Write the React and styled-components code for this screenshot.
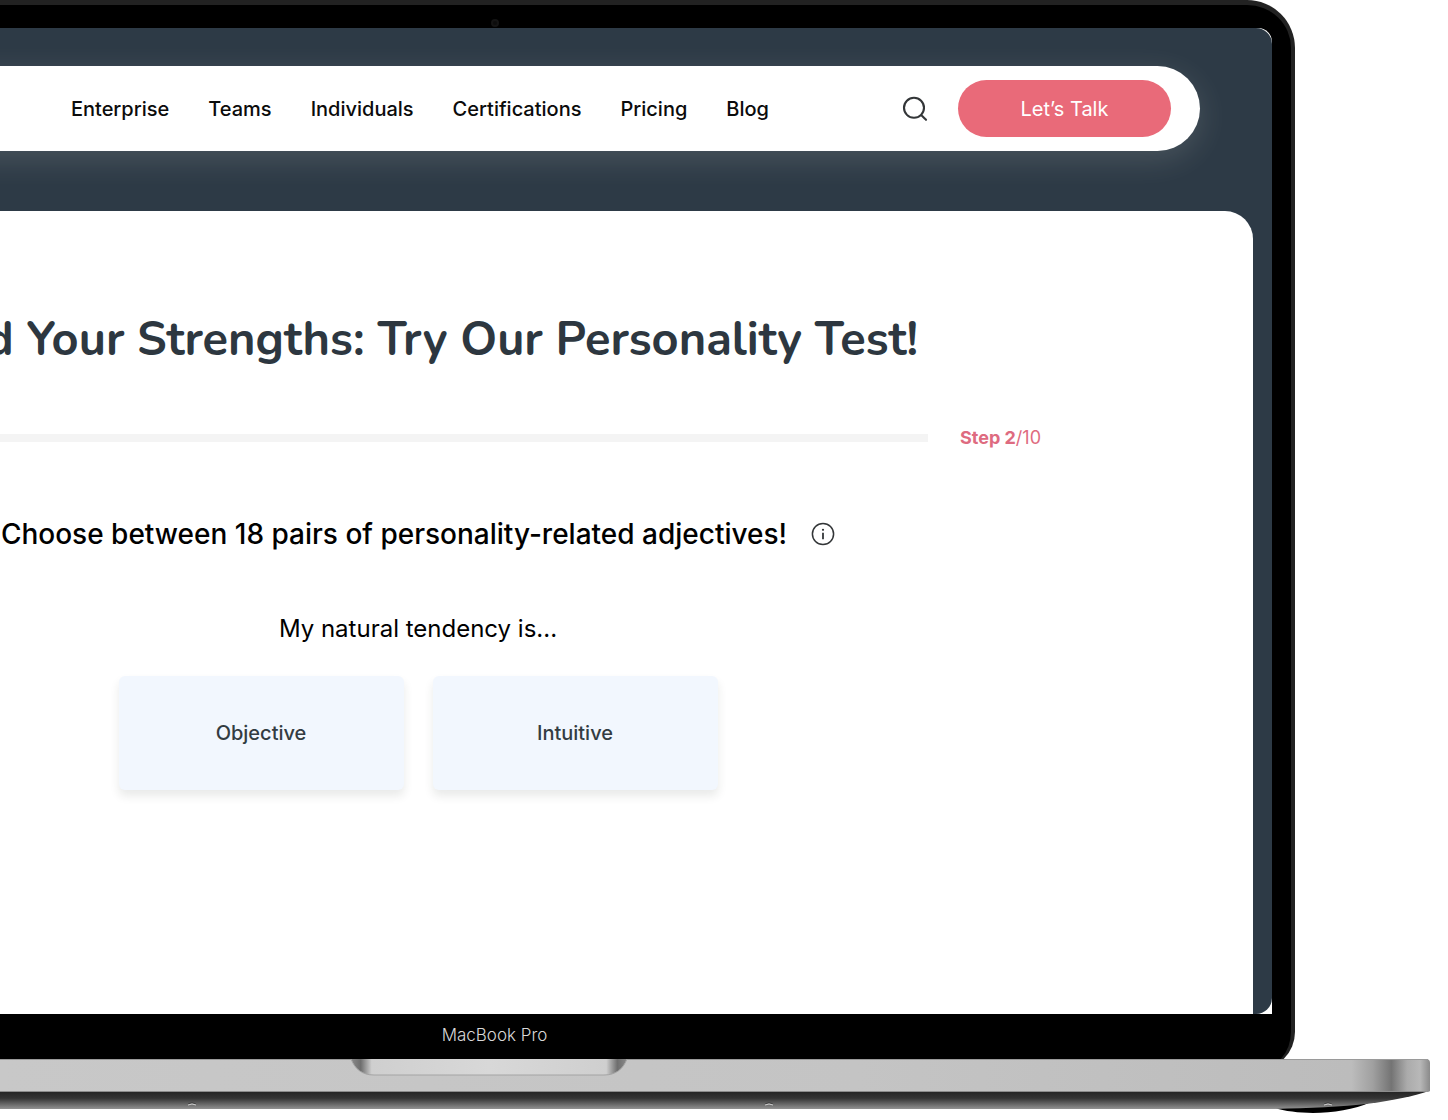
import React from 'react';
import styled, { createGlobalStyle } from 'styled-components';

const links = ['Enterprise', 'Teams', 'Individuals', 'Certifications', 'Pricing', 'Blog'];
const answers = ['Objective', 'Intuitive'];

const SearchIcon = () => (
    <svg width="26" height="26" viewBox="0 0 26 26" fill="none" stroke="#333638" strokeWidth="2.1" strokeLinecap="round" aria-hidden="true">
        <circle cx="12" cy="11.8" r="10" />
        <path d="M19.4 19.2L24 23.8" />
    </svg>
);

const InfoIcon = () => (
    <svg width="24" height="24" viewBox="0 0 24 24" fill="none" stroke="#333638" strokeWidth="1.5" aria-hidden="true">
        <circle cx="12" cy="12" r="10.6" />
        <path d="M12 10.8V17.2" strokeWidth="1.8" />
        <circle cx="12" cy="7.8" r="1.1" fill="#333638" stroke="none" />
    </svg>
);

const LaptopBase = () => (
    <BaseDrawing viewBox="0 0 1448 56" aria-hidden="true">
        <defs>
            <linearGradient id="metal" gradientUnits="userSpaceOnUse" x1="0" y1="0" x2="1430" y2="0">
                <stop offset="0" stopColor="#c8c8c8" />
                <stop offset="0.6" stopColor="#c4c4c4" />
                <stop offset="0.945" stopColor="#bcbcbc" />
                <stop offset="0.96" stopColor="#a0a0a0" />
                <stop offset="0.973" stopColor="#747474" />
                <stop offset="0.984" stopColor="#ababab" />
                <stop offset="0.993" stopColor="#b8b8b8" />
                <stop offset="1" stopColor="#8a8a8a" />
            </linearGradient>
            <linearGradient id="under" x1="0" y1="0" x2="0" y2="1">
                <stop offset="0" stopColor="#232323" />
                <stop offset="0.4" stopColor="#343434" />
                <stop offset="1" stopColor="#929292" />
            </linearGradient>
            <linearGradient id="notch" x1="0" y1="0" x2="1" y2="0">
                <stop offset="0" stopColor="#8a8a8a" />
                <stop offset="0.035" stopColor="#6e6e6e" />
                <stop offset="0.075" stopColor="#cfcfcf" />
                <stop offset="0.5" stopColor="#d8d8d8" />
                <stop offset="0.925" stopColor="#cfcfcf" />
                <stop offset="0.965" stopColor="#6e6e6e" />
                <stop offset="1" stopColor="#8a8a8a" />
            </linearGradient>
        </defs>
        <path d="M1274 49C1300 56.5 1342 56 1371 43Z" fill="#000" />
        <path d="M0 32H1429C1415 37 1395 41 1370 44.5C1340 48 1310 49 1274 50H0Z" fill="url(#under)" />
        <path d="M0 0H1426Q1430 0 1430 4V32Q1429 33 1424 33H0Z" fill="url(#metal)" />
        <path d="M0 32.5H1426" stroke="#8c8c8c" />
        <path d="M0 0.5H1428" stroke="#9a9a9a" />
        <path d="M351 0C355 10 362 16 374 16H604C616 16 623 10 627 0Z" fill="url(#notch)" />
        <path d="M351 0C355 10 362 16 374 16H604C616 16 623 10 627 0" fill="none" stroke="#a4a4a4" />
        {[192, 769, 1328].map(x => (
            <g key={x}>
                <path d={`M${x - 4} 45Q${x} 42 ${x + 4} 45`} fill="none" stroke="#444" />
                <path d={`M${x - 4} 46L${x} 45L${x + 4} 46`} fill="none" stroke="#d0d0d0" />
            </g>
        ))}
    </BaseDrawing>
);

const App = () => (
    <Page>
        <GlobalStyle />
        <Lid>
            <Camera />
            <ScreenBack>
                <Screen>
                    <NavBar>
                        <Nav>
                            {links.map(link => (
                                <NavLink key={link} href="#">{link}</NavLink>
                            ))}
                        </Nav>
                        <IconButton aria-label="Search">
                            <SearchIcon />
                        </IconButton>
                        <TalkButton>Let’s Talk</TalkButton>
                    </NavBar>
                    <Panel>
                        <Title>Find Your Strengths: Try Our Personality Test!</Title>
                        <ProgressRow>
                            <Progress value="1" max="10" aria-label="Test progress" />
                            <Step><b>Step 2</b>/10</Step>
                        </ProgressRow>
                        <Question>
                            Choose between 18 pairs of personality-related adjectives!
                            <IconButton aria-label="More information">
                                <InfoIcon />
                            </IconButton>
                        </Question>
                        <Prompt>My natural tendency is...</Prompt>
                        <Answers>
                            {answers.map(answer => (
                                <Answer key={answer}>{answer}</Answer>
                            ))}
                        </Answers>
                    </Panel>
                </Screen>
            </ScreenBack>
            <Model>MacBook Pro</Model>
        </Lid>
        <LaptopBase />
    </Page>
);

const GlobalStyle = createGlobalStyle`
    * {
        box-sizing: border-box;
    }
    body {
        margin: 0;
        background-color: white;
        font-family: Inter, 'Liberation Sans', sans-serif;
    }
    button {
        border: 0;
        padding: 0;
        font-family: inherit;
        cursor: pointer;
    }
`;

const Page = styled.div`
    overflow: hidden;
`;

/* the left part of the laptop runs off the page */
const Lid = styled.main`
    margin: 0 153px 0 -306px;
    padding: 0 19px;
    background-color: black;
    border: 4px solid #222;
    border-top-width: 5px;
    border-bottom: 0;
    border-radius: 48px 48px 38px 38px;
`;

const Camera = styled.div`
    width: 8px;
    height: 8px;
    margin: 0 auto;
    border: 2px solid #141414;
    border-radius: 50%;
    background-color: #0c0c0c;
    translate: 0 14px;
`;

const ScreenBack = styled.div`
    margin-top: 15px;
    background-color: white;
    border-top-right-radius: 14px;
`;

const Screen = styled.div`
    display: flex;
    flex-direction: column;
    padding: 38px 19px 0 0;
    background-color: #2d3a46;
    border-radius: 16px;
    overflow: hidden;
`;

const NavBar = styled.header`
    display: flex;
    align-items: center;
    justify-content: flex-end;
    height: 85px;
    margin-right: 53px;
    padding-right: 29px;
    background-color: white;
    border-radius: 43px;
    box-shadow: 0 8px 32px rgba(255, 255, 240, 0.14);
`;

const Nav = styled.nav`
    display: flex;
    gap: 39px;
    margin-right: 133px;
`;

const NavLink = styled.a`
    color: #0b0b0b;
    font-size: 20px;
    font-weight: 500;
    line-height: 24px;
    text-decoration: none;
`;

const IconButton = styled.button`
    display: flex;
    background: none;
`;

const TalkButton = styled.button`
    width: 213px;
    height: 57px;
    margin-left: 30px;
    border-radius: 29px;
    background-color: #e96a79;
    color: white;
    font-size: 20px;
`;

const Panel = styled.section`
    display: flex;
    flex-direction: column;
    align-items: center;
    min-height: 803px;
    margin: 60px 0 0 -134px;
    padding-top: 96px;
    background-color: white;
    border-top-right-radius: 28px;
    white-space: nowrap;
`;

const Title = styled.h1`
    margin: 0;
    color: #2d3740;
    font-family: Nunito, 'Open Sans', sans-serif;
    font-size: 47px;
    font-weight: 700;
    line-height: 66px;
`;

const ProgressRow = styled.div`
    display: flex;
    align-items: center;
    gap: 32px;
    width: 1246px;
    max-width: 100%;
    margin-top: 53px;
`;

const Progress = styled.progress`
    appearance: none;
    flex: 1;
    height: 8px;
    border: 0;

    &::-webkit-progress-bar {
        background-color: #f4f4f4;
    }
    &::-webkit-progress-value {
        background-color: #e96a79;
    }
`;

const Step = styled.span`
    color: #de6b80;
    font-size: 18px;
    line-height: 24px;
`;

const Question = styled.h2`
    display: flex;
    align-items: center;
    gap: 24px;
    margin: 66px 0 0;
    color: black;
    font-size: 28px;
    font-weight: 500;
    line-height: 36px;
`;

const Prompt = styled.p`
    margin: 61px 0 0;
    color: black;
    font-size: 24px;
    line-height: 32px;
`;

const Answers = styled.div`
    display: flex;
    gap: 29px;
    margin-top: 31px;
`;

const Answer = styled.button`
    width: 285px;
    height: 114px;
    border-radius: 6px;
    background-color: #f2f7fe;
    box-shadow: 0 6px 10px rgba(40, 50, 40, 0.1);
    color: #333c42;
    font-size: 20px;
    font-weight: 500;
`;

const Model = styled.div`
    padding: 9px 0 23px;
    color: #d8d8d8;
    font-size: 17px;
    font-weight: 300;
    line-height: 24px;
    text-align: center;
`;

/* covers the rounded bottom of the lid */
const BaseDrawing = styled.svg`
    display: block;
    width: 100%;
    margin-top: -11px;
`;

export default App;
